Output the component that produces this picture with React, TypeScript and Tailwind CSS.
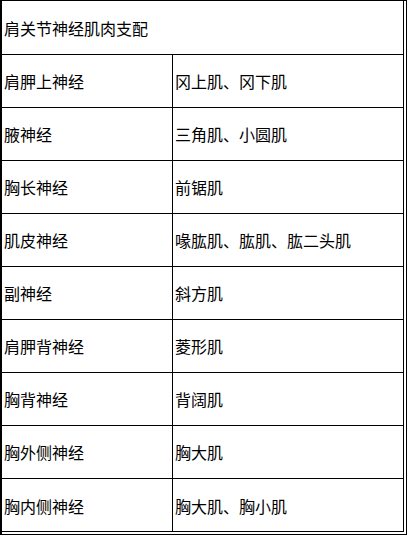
const rows: [string, string][] = [
  ["肩胛上神经", "冈上肌、冈下肌"],
  ["腋神经", "三角肌、小圆肌"],
  ["胸长神经", "前锯肌"],
  ["肌皮神经", "喙肱肌、肱肌、肱二头肌"],
  ["副神经", "斜方肌"],
  ["肩胛背神经", "菱形肌"],
  ["胸背神经", "背阔肌"],
  ["胸外侧神经", "胸大肌"],
  ["胸内侧神经", "胸大肌、胸小肌"],
];

export default function App() {
  return (
    <div className="w-[408px] h-[537px] bg-white text-black text-[16px] leading-none font-['Noto_Sans_CJK_SC','Noto_Sans',sans-serif]">
      {/* outer table border */}
      <div className="w-[407px] h-[535px] border-l-2 border-t border-r border-b border-black pr-[2px] pb-[2px]">
        <div className="h-full border-r border-b border-black flex flex-col">
          <div className="h-[54px] border-b border-black flex items-center pl-[2px] shrink-0">
            肩关节神经肌肉支配
          </div>
          {rows.map(([nerve, muscle], i) => (
            <div
              key={nerve}
              className={`h-[53px] flex shrink-0 ${i < rows.length - 1 ? "border-b border-black" : ""}`}
            >
              <div className="w-[171px] border-r border-black flex items-center pl-[2px]">{nerve}</div>
              <div className="flex-1 flex items-center pl-[2px]">{muscle}</div>
            </div>
          ))}
        </div>
      </div>
    </div>
  );
}
